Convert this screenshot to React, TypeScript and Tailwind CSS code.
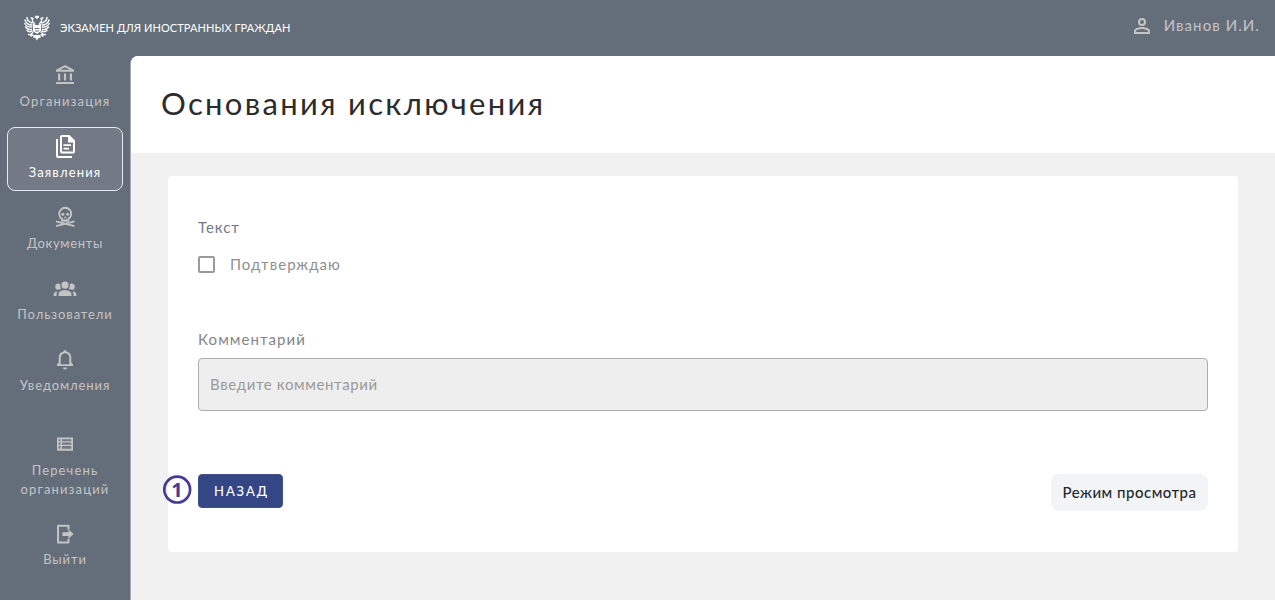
import type { ReactNode } from 'react';

function Icon({ children, className = 'size-6' }: { children: ReactNode; className?: string }) {
  return (
    <svg viewBox="0 0 24 24" fill="currentColor" className={`shrink-0 ${className}`}>
      {children}
    </svg>
  );
}

const BankIcon = () => (
  <Icon>
    <path fillRule="evenodd" d="M12 2 3 6.800V8.700h18V6.800L12 2Zm0 2.200 4.800 2.600H7.200L12 4.200ZM5 10.500h2.200v7H5v-7Zm5.900 0h2.200v7h-2.200v-7Zm5.900 0H19v7h-2.200v-7ZM3 19h18v2H3v-2Z" />
  </Icon>
);
const DocsIcon = () => (
  <Icon>
    <path fillRule="evenodd" d="M9 1h7.500L22 6.500v11a2 2 0 0 1-2 2H9a2 2 0 0 1-2-2V3a2 2 0 0 1 2-2Zm0 2v14.500h11V8.500h-5V3H9ZM10.500 10.300H18v1.700h-7.500v-1.700Zm0 3.500h5.500v1.700h-5.500v-1.700ZM3 5h2v17h14v2H5a2 2 0 0 1-2-2V5Z" />
  </Icon>
);
const SkullIcon = () => (
  <Icon>
    <g fill="none" stroke="currentColor" strokeWidth="1.900">
      <path d="M9 15.800v-1.900a6 6 0 1 1 6.400 0v1.900Z" strokeLinejoin="round" />
      <path d="m3 16.300 18.500 4.900M21.500 16.300 3 21.200" />
    </g>
    <circle cx="9.900" cy="9.300" r="1.500" />
    <circle cx="14.600" cy="9.300" r="1.500" />
    <path d="m12.200 11 1.200 2h-2.400ZM10.600 13.600h1v2h-1zM12.800 13.600h1v2h-1z" />
  </Icon>
);
const GroupIcon = () => (
  <Icon>
    <path d="M12 5.500a3.600 3.600 0 1 1 0 7.200 3.600 3.600 0 0 1 0-7.200M5.400 7.500c.7 0 1.300.2 1.800.5-.3 1.900.1 3.400 1.100 4.600-.7.700-1.600 1.200-2.900 1.200a3.150 3.150 0 0 1 0-6.300M18.600 7.500c-.7 0-1.300.2-1.800.5.3 1.900-.1 3.400-1.100 4.600.7.700 1.600 1.200 2.900 1.200a3.150 3.150 0 0 0 0-6.300M5.500 18.250c0-2.700 2.900-4.050 6.500-4.050s6.500 1.350 6.500 4.050V20h-13v-1.750M.6 20v-1.500c0-1.600 1.300-2.700 3.950-3-.7.800-.95 1.700-.95 2.750V20h-3m22.800 0h-3v-1.750c0-1.050-.25-1.950-.95-2.750 2.650.3 3.950 1.400 3.950 3V20Z" />
  </Icon>
);
const BellIcon = () => (
  <Icon>
    <path fillRule="evenodd" d="M10 20.500h4a2 2 0 0 1-4 0ZM20 17.300V19H4v-1.700l1.700-1.500v-5.300a6.300 6.300 0 0 1 4.800-6 1.500 1.500 0 0 1 3 0 6.300 6.300 0 0 1 4.800 6v5.300l1.700 1.500Zm-3.700 0v-6.800a4.300 4.300 0 0 0-8.600 0v6.800h8.600Z" />
  </Icon>
);
const ListIcon = () => (
  <Icon>
    <path d="M4 5.500h16v13.300H4z" opacity=".15" />
    <path d="M4 5.500h16v1.700H4zM4 9.200h16v1.300H4zM4 12.800h16v1.300H4zM4 16.700h16v2.100H4zM4 5.500h1.700v13.300H4zM7.500 5.500h1.500v13.300H7.500zM18.300 5.500H20v13.300h-1.700z" />
  </Icon>
);
const ExitIcon = () => (
  <Icon>
    <path d="M15.500 7.500V3.800H5v16.700h10.500v-3.700" fill="none" stroke="currentColor" strokeWidth="2" strokeLinejoin="round" />
    <path d="M9.500 10.300h6V7.500l5.200 4.600-5.200 4.700V14h-6z" />
  </Icon>
);

function Eagle() {
  return (
    <svg viewBox="0 0 26 26" className="size-[26px] shrink-0" fill="none" stroke="#fff" strokeLinecap="round">
      <g strokeWidth="1.400">
        <path d="M1 5c1 3 3 5 7 5M.8 8.500c1.500 2.500 4 3.800 7 3.500M1.500 12c1.500 2 3.500 3 6 2.500M3 15.500c1.500 1.300 3.500 1.500 5 .5M3 2.500c0 2.500 2 4.500 5 5.500" />
        <path d="M25 5c-1 3-3 5-7 5M25.200 8.500c-1.500 2.500-4 3.800-7 3.500M24.500 12c-1.500 2-3.500 3-6 2.500M23 15.500c-1.500 1.300-3.500 1.500-5 .5M23 2.500c0 2.500-2 4.500-5 5.500" />
        <path d="M10.500 8.500C8 7 7.500 4 9.500 3.500L7 3M15.500 8.500C18 7 18.500 4 16.500 3.500L19 3" />
        <path d="M9 17c-1 2-2.500 3-4.500 2.500M17 17c1 2 2.500 3 4.500 2.500M7 21l2-1M19 21l-2-1" />
      </g>
      <path d="M11 .8h4v2h-4zM12.300 2h1.400v2h-1.400zM9 8.500l4 2 4-2v7.500l-4 3-4-3z" fill="#fff" stroke="none" />
      <path d="M11 13.500h4M11.500 16h3" stroke="#646e7a" strokeWidth="1" />
      <path d="M10 20h6l1 2.500-2.500.5-1.500 2.500-1.500-2.500L9 22.500z" fill="#fff" stroke="none" />
    </svg>
  );
}

interface NavItem {
  label: ReactNode;
  icon: ReactNode;
  active?: boolean;
  text: string;
  box: string;
}

const items: NavItem[] = [
  { label: 'Организация', icon: <BankIcon />, text: 'tracking-[1.150px]', box: 'h-16' },
  { label: 'Заявления', icon: <DocsIcon />, active: true, text: 'tracking-[1.150px]', box: 'h-16' },
  { label: 'Документы', icon: <SkullIcon />, text: 'tracking-[0.700px]', box: 'h-16' },
  { label: 'Пользователи', icon: <GroupIcon />, text: 'tracking-[0.900px]', box: 'h-16' },
  { label: 'Уведомления', icon: <BellIcon />, text: 'tracking-[0.900px]', box: 'h-16' },
  { label: <>Перечень<br />организаций</>, icon: <ListIcon />, text: 'tracking-[1.150px]', box: 'mt-[14px] h-[83px]' },
  { label: 'Выйти', icon: <ExitIcon />, text: 'tracking-[0.900px] -translate-y-px', box: 'h-16' },
];

export default function App() {
  return (
    <div className="flex h-[601px] w-[1275px] flex-col overflow-hidden bg-white font-['Lato','Open_Sans',sans-serif]">
      <div className="flex h-[600px] flex-col bg-[#646e7a]">
        <header className="flex h-14 shrink-0 items-center justify-between pr-[15px] pl-6 text-[#c4c4c4]">
          <div className="flex items-center gap-[10px] text-white">
            <Eagle />
            <span className="text-[11px] tracking-[0.080px] whitespace-nowrap">ЭКЗАМЕН ДЛЯ ИНОСТРАННЫХ ГРАЖДАН</span>
          </div>
          <div className="mb-[5px] flex items-center gap-[10px]">
            <Icon>
              <path fillRule="evenodd" d="M12 4a4 4 0 1 1 0 8 4 4 0 0 1 0-8Zm0 2a2 2 0 1 0 0 4 2 2 0 0 0 0-4Zm0 7c2.700 0 8 1.300 8 4v3H4v-3c0-2.700 5.300-4 8-4Zm0 1.900c-3 0-6.100 1.500-6.100 2.100v1.100h12.200V17c0-.6-3.100-2.100-6.100-2.100Z" />
            </Icon>
            <span className="text-[15px] tracking-[1.080px] whitespace-nowrap">Иванов И.И.</span>
          </div>
        </header>
        <div className="flex min-h-0 flex-1">
          <nav className="flex w-[130px] shrink-0 flex-col items-center gap-[7px]">
            {items.map((item, i) => (
              <div
                key={i}
                className={`flex w-[116px] shrink-0 flex-col items-center rounded-lg border pt-[6px] text-center ${item.box} ${item.active ? 'border-[#e8e9eb] bg-[#737a86] text-white' : 'border-transparent text-[#c4c4c4]'}`}
              >
                {item.icon}
                <span className={`mt-[5px] text-[13px] leading-[19px] whitespace-nowrap ${item.text}`}>{item.label}</span>
              </div>
            ))}
          </nav>
          <main className="flex flex-1 flex-col overflow-hidden rounded-tl-lg border-l border-[#a9adb3] bg-[#f1f1f1]">
            <div className="flex h-[97px] shrink-0 items-center bg-white pb-[3px] pl-[30px]">
              <h1 className="text-[31px] tracking-[2.330px] whitespace-nowrap text-[#2c2c2c]">Основания исключения</h1>
            </div>
            <section className="mt-[23px] mr-[37px] ml-[37px] flex h-[376px] shrink-0 flex-col rounded bg-white px-[30px] pt-[41px]">
              <div className="h-5 text-[15px] leading-5 tracking-[0.950px] text-[#737a86]">Текст</div>
              <label className="mt-[17px] flex h-5 items-center gap-[15px] text-[15px] leading-5 tracking-[1.040px] text-[#8f8f8f]">
                <span className="mt-px size-[17px] rounded-[2px] border-2 border-[#9a9a9a]" />
                <span>Подтверждаю</span>
              </label>
              <div className="mt-[55px] h-5 text-[15px] leading-5 tracking-[1.080px] text-[#858688]">Комментарий</div>
              <div className="mt-[9px] flex h-[53px] shrink-0 items-center rounded border border-[#adadad] bg-[#eee] px-[11px] text-[15px] tracking-[0.630px] text-[#9a9a9a]">
                Введите комментарий
              </div>
              <div className="mt-[63px] flex items-start justify-between">
                <div className="-ml-[35px] flex items-start gap-[6px]">
                  <svg viewBox="0 0 29 30" className="mt-px h-[30px] w-[29px]">
                    <circle cx="14.200" cy="14.600" r="12.900" fill="none" stroke="#463a97" strokeWidth="2.700" />
                    <text x="14" y="21.700" textAnchor="middle" fill="#463a97" fontSize="20" fontWeight="700" fontFamily="Open Sans, sans-serif">1</text>
                  </svg>
                  <button className="h-[34px] w-[85px] rounded border border-[#40518d] bg-[#344684] pt-px pl-0.5 text-[13px] font-medium tracking-[1.850px] text-white">НАЗАД</button>
                </div>
                <button className="h-[37px] w-[157px] rounded-lg bg-[#f2f4f6] text-[15px] font-medium tracking-[0.500px] whitespace-nowrap text-[#24272b]">Режим просмотра</button>
              </div>
            </section>
          </main>
        </div>
      </div>
    </div>
  );
}
